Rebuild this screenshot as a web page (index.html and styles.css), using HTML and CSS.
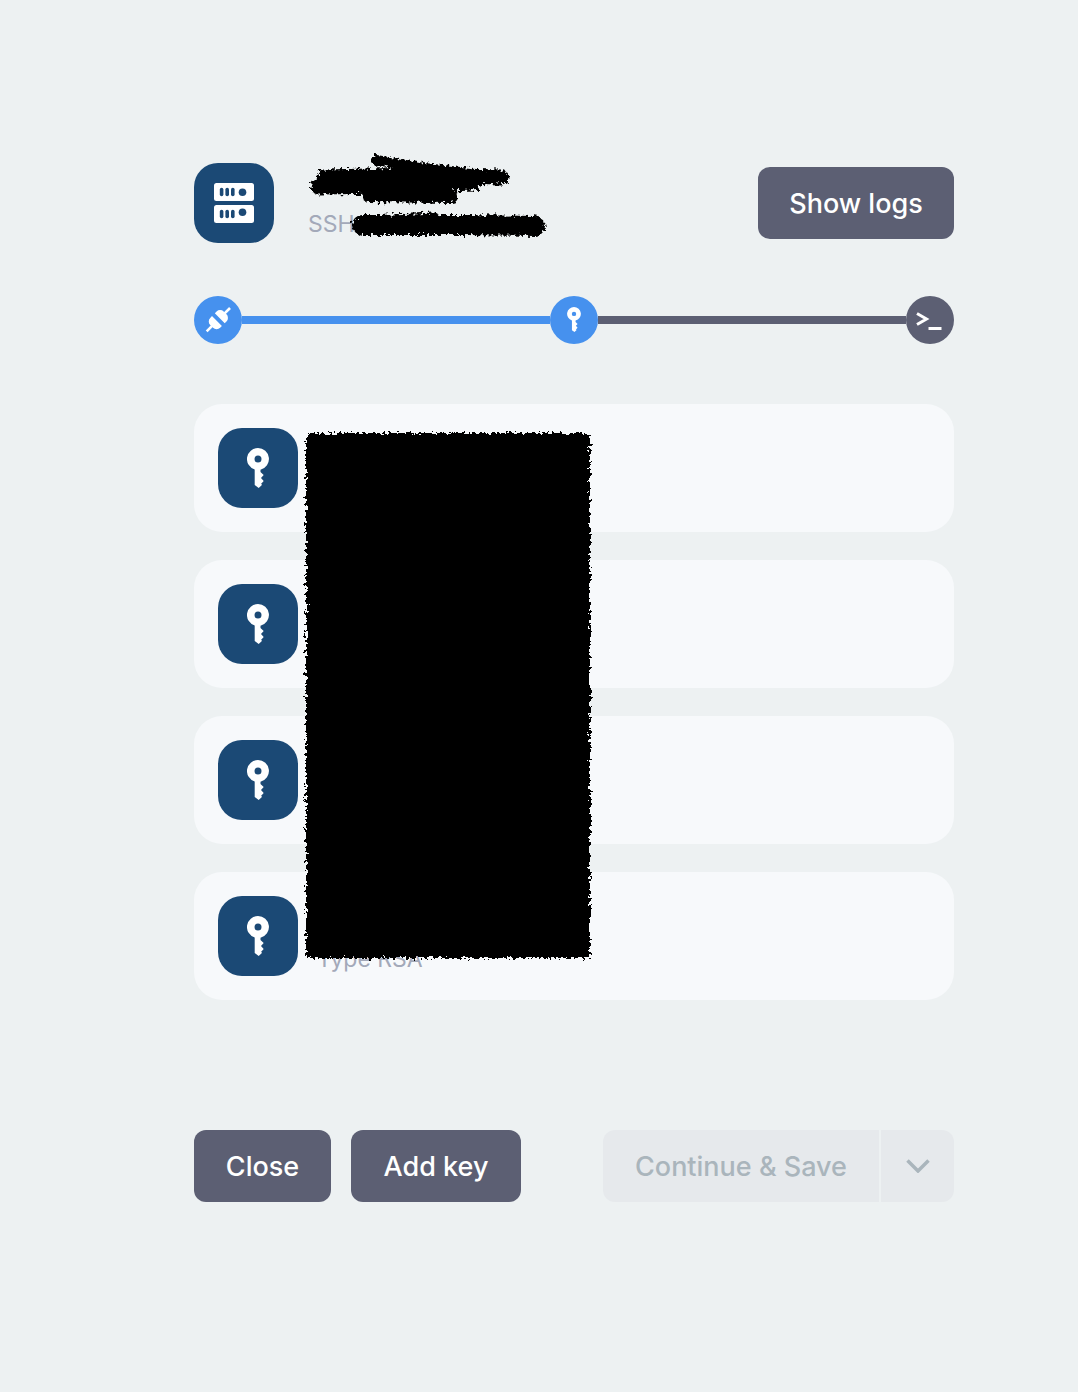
FILE: index.html
```html
<!DOCTYPE html>
<html lang="en">
<head>
  <meta charset="UTF-8">
  <meta name="viewport" content="width=device-width, initial-scale=1.0">
  <title>SSH keys</title>
  <link rel="stylesheet" href="styles.css">
</head>
<body>
  <svg class="defs" width="0" height="0" aria-hidden="true">
    <defs>
      <filter id="rough" x="-10%" y="-30%" width="120%" height="160%">
        <feTurbulence type="fractalNoise" baseFrequency="0.3" numOctaves="3" seed="4"/>
        <feDisplacementMap in="SourceGraphic" scale="9"/>
      </filter>
      <symbol id="key" viewBox="0 0 22 40">
        <path fill-rule="evenodd" d="M11 0a11 11 0 0 1 2.500 21.700V24L16.700 27L14 30L16.700 33L14 36L15.200 36.800L11.700 40L7.700 37V21.500A11 11 0 0 1 11 0zm0 7.500a3.500 3.500 0 1 0 0 7 3.500 3.500 0 0 0 0-7z"/>
      </symbol>
    </defs>
  </svg>

  <div class="container">
    <header class="header">
      <div class="app-icon">
        <svg width="40" height="40" viewBox="0 0 40 40">
          <rect y="0" width="40" height="18" rx="2.500" fill="#fff"/>
          <rect y="22" width="40" height="18" rx="2.500" fill="#fff"/>
          <g fill="#1b4975">
            <rect x="5.800" y="4.800" width="3.600" height="8.400" rx="1.800"/>
            <rect x="11.400" y="4.800" width="3.600" height="8.400" rx="1.800"/>
            <rect x="17" y="4.800" width="3.600" height="8.400" rx="1.800"/>
            <circle cx="28.500" cy="9.300" r="3.800"/>
            <rect x="5.800" y="26.800" width="3.600" height="8.400" rx="1.800"/>
            <rect x="11.400" y="26.800" width="3.600" height="8.400" rx="1.800"/>
            <rect x="17" y="26.800" width="3.600" height="8.400" rx="1.800"/>
            <circle cx="28.500" cy="29.300" r="3.800"/>
          </g>
        </svg>
      </div>
      <div class="host">
        <div class="host-sub">SSH</div>
        <svg class="scribble" width="250" height="100" viewBox="0 0 250 100">
          <g filter="url(#rough)" fill="none" stroke="#000" stroke-linecap="round">
            <path d="M72 9L120 17L165 22" stroke-width="10"/>
            <path d="M20 26L110 24L197 26" stroke-width="15"/>
            <path d="M14 36L90 35L170 32" stroke-width="15"/>
            <path d="M64 45L148 46" stroke-width="12"/>
            <path d="M66 71L130 68" stroke-width="13"/>
            <path d="M58 74L160 74L231 75" stroke-width="20"/>
          </g>
        </svg>
      </div>
      <button class="btn btn-logs">Show logs</button>
    </header>

    <div class="steps">
      <div class="step step-done">
        <svg width="48" height="48" viewBox="0 0 48 48">
          <g transform="translate(24 24) rotate(45)" fill="#fff">
            <path d="M-7-2.500H7V-5A5 5 0 0 0 2-10H-2A5 5 0 0 0-7-5z"/>
            <path d="M-7 1.500H7V4A5 5 0 0 1 2 9H-2A5 5 0 0 1-7 4z"/>
            <rect x="-1.300" y="-17" width="2.600" height="8"/>
            <rect x="-1.300" y="8" width="2.600" height="8"/>
          </g>
        </svg>
      </div>
      <div class="line line-done"></div>
      <div class="step step-done">
        <svg class="step-key" width="14" height="25"><use href="#key"/></svg>
      </div>
      <div class="line"></div>
      <div class="step step-todo">
        <svg width="48" height="48" viewBox="0 0 48 48" fill="none" stroke="#fff" stroke-width="3">
          <path d="M11 17.500L20.500 23L11 28.500"/>
          <path d="M22.500 32.500H35.500"/>
        </svg>
      </div>
    </div>

    <div class="key-list">
      <div class="key-card"><div class="key-icon"><svg width="22" height="40"><use href="#key"/></svg></div></div>
      <div class="key-card"><div class="key-icon"><svg width="22" height="40"><use href="#key"/></svg></div></div>
      <div class="key-card"><div class="key-icon"><svg width="22" height="40"><use href="#key"/></svg></div></div>
      <div class="key-card">
        <div class="key-icon"><svg width="22" height="40"><use href="#key"/></svg></div>
        <div class="key-type">Type RSA</div>
      </div>
      <svg class="redaction" width="284" height="525" viewBox="0 0 284 525">
        <rect x="0" y="0" width="284" height="525" fill="#000" filter="url(#rough)"/>
      </svg>
    </div>

    <footer class="footer">
      <button class="btn btn-close">Close</button>
      <button class="btn btn-add">Add key</button>
      <div class="split">
        <button class="btn-disabled btn-continue" disabled>Continue &amp; Save</button>
        <button class="btn-disabled btn-more" disabled>
          <svg width="24" height="14" viewBox="0 0 24 14" fill="none" stroke="#aab5bc" stroke-width="3.500">
            <path d="M1.500 1.500L12 12L22.500 1.500"/>
          </svg>
        </button>
      </div>
    </footer>
  </div>
</body>
</html>
```

FILE: styles.css
```css
body {
  margin: 0;
  min-height: 1392px;
  background: #edf1f2;
  font-family: Inter, "Noto Sans", sans-serif;
}

.defs {
  display: block;
  height: 0;
}

.container {
  width: 760px;
  margin-left: 194px;
  padding-top: 163px;
}

.header {
  display: flex;
  align-items: center;
  height: 80px;
}

.app-icon, .key-icon {
  flex: none;
  width: 80px;
  height: 80px;
  display: flex;
  align-items: center;
  justify-content: center;
  background: #1b4975;
  border-radius: 24px;
}

.key-icon svg {
  fill: #fff;
}

.host {
  flex: 1;
  align-self: stretch;
  position: relative;
  padding: 47px 0 0 34px;
  font-size: 23px;
  line-height: 28px;
  color: #a3a9b9;
}

.scribble {
  position: absolute;
  left: 30px;
  top: -12px;
  overflow: visible;
}

.btn {
  height: 72px;
  border: none;
  border-radius: 12px;
  background: #5c5f73;
  color: #fff;
  font-family: inherit;
  font-size: 27px;
  font-weight: 500;
}

.btn-logs {
  width: 196px;
}

.steps {
  display: flex;
  align-items: center;
  margin-top: 53px;
}

.step {
  flex: none;
  width: 48px;
  height: 48px;
  border-radius: 50%;
  display: flex;
  align-items: center;
  justify-content: center;
}

.step-done {
  background: #4691ee;
}

.step-todo {
  background: #5c5f73;
}

.step-key {
  fill: #fff;
  margin-top: -1px;
}

.line {
  flex: 1;
  height: 8px;
  background: #5c5f73;
}

.line-done {
  background: #4691ee;
}

.key-list {
  position: relative;
  display: flex;
  flex-direction: column;
  gap: 28px;
  margin-top: 60px;
}

.key-card {
  height: 128px;
  box-sizing: border-box;
  padding: 24px;
  display: flex;
  background: #f7f9fb;
  border-radius: 28px;
}

.key-type {
  margin: 49px 0 0 19px;
  font-size: 23px;
  line-height: 28px;
  color: #a3a9b9;
}

.redaction {
  position: absolute;
  left: 112px;
  top: 29px;
  overflow: visible;
}

.footer {
  display: flex;
  margin-top: 130px;
  gap: 20px;
}

.btn-close {
  width: 137px;
}

.btn-add {
  width: 170px;
}

.split {
  display: flex;
  gap: 2px;
  margin-left: auto;
}

.btn-disabled {
  height: 72px;
  border: none;
  background: #e6e9ec;
  color: #aab5bc;
  font-family: inherit;
  font-size: 27px;
  font-weight: 500;
}

.btn-continue {
  width: 276px;
  border-radius: 12px 0 0 12px;
}

.btn-more {
  width: 73px;
  border-radius: 0 12px 12px 0;
  display: flex;
  align-items: center;
  justify-content: center;
}
```
